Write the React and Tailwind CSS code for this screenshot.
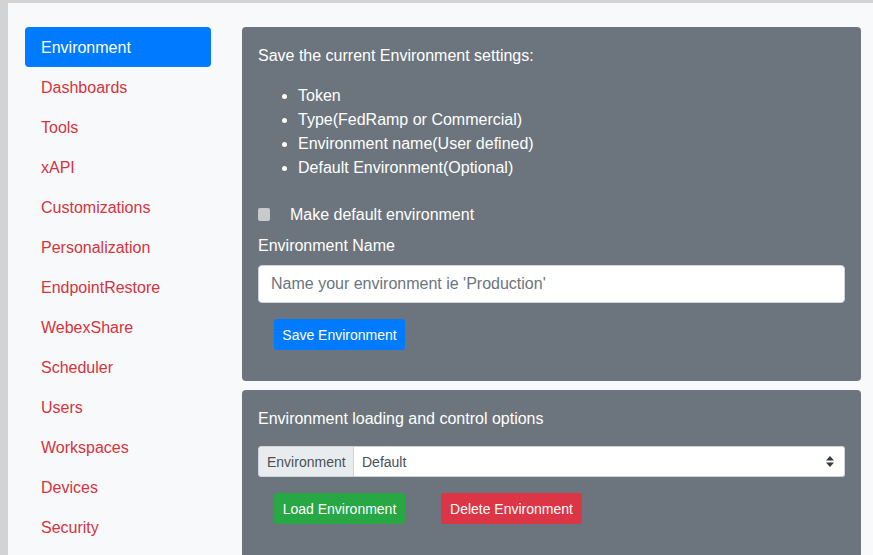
import { useState } from 'react';

const navItems = [
  'Environment',
  'Dashboards',
  'Tools',
  'xAPI',
  'Customizations',
  'Personalization',
  'EndpointRestore',
  'WebexShare',
  'Scheduler',
  'Users',
  'Workspaces',
  'Devices',
  'Security',
];

const App = () => {
  const [active, setActive] = useState('Environment');
  const [envName, setEnvName] = useState('');

  return (
    <div
      className="w-[873px] h-[555px] overflow-hidden bg-[#d3d3d3] pt-[3px] pl-[8px]"
      style={{ fontFamily: '"Liberation Sans", Arial, sans-serif' }}
    >
      <div className="flex h-full bg-[#f8f9fa]">
        {/* Sidebar */}
        <nav className="w-[234px] shrink-0 pl-[17px] pr-[31px] pt-[24px] flex flex-col">
          {navItems.map((item) => (
            <button
              key={item}
              onClick={() => setActive(item)}
              className={`h-10 px-4 pt-[2px] text-left text-base rounded-[4px] ${
                active === item ? 'bg-[#007bff] text-white' : 'text-[#d6333d]'
              }`}
            >
              {item}
            </button>
          ))}
        </nav>

        {/* Main content */}
        <main className="w-[619px] pt-[24px] flex flex-col gap-[9px]">
          <section className="bg-[#6c757d] rounded-[4px] px-4 pt-[17px] pb-[31px] text-white">
            <p className="text-base leading-6">Save the current Environment settings:</p>
            <ul className="mt-4 pl-10 list-disc text-base leading-6">
              <li>Token</li>
              <li>Type(FedRamp or Commercial)</li>
              <li>Environment name(User defined)</li>
              <li>Default Environment(Optional)</li>
            </ul>
            <label className="mt-[23px] flex items-center h-6 text-base">
              <span className="w-[12px] h-[13px] rounded-[2px] bg-[#c9cacb] mr-5 -mt-[2px]" />
              Make default environment
            </label>
            <p className="mt-[7px] text-base leading-6">Environment Name</p>
            <input
              value={envName}
              onChange={(e) => setEnvName(e.target.value)}
              placeholder="Name your environment ie 'Production'"
              className="mt-[7px] w-full h-[38px] rounded-[4px] bg-white px-3 text-base text-[#495057] placeholder:text-[#6c757d] border border-[#ced4da] outline-none"
            />
            <button className="mt-4 ml-4 h-[31px] w-[131px] rounded-[3px] bg-[#007bff] text-sm text-white">
              Save Environment
            </button>
          </section>

          <section className="bg-[#6c757d] rounded-[4px] px-4 pt-[17px] pb-[40px] text-white">
            <p className="text-base leading-6">Environment loading and control options</p>
            <div className="mt-[15px] flex h-[31px] text-sm">
              <span className="w-[96px] flex items-center px-2 bg-[#e9ecef] text-[#495057] rounded-l-[3px] border border-[#ced4da]">
                Environment
              </span>
              <div className="flex-1 flex items-center justify-between pl-2 pr-[10px] bg-white text-[#495057] rounded-r-[3px] border border-l-0 border-[#ced4da]">
                <span>Default</span>
                <svg width="8" height="11" viewBox="0 0 8 11">
                  <path d="M4 0 L8 4.5 L0 4.5 Z" fill="#343a40" />
                  <path d="M0 6.5 L8 6.5 L4 11 Z" fill="#343a40" />
                </svg>
              </div>
            </div>
            <div className="mt-4 ml-4 flex gap-[36px]">
              <button className="h-[31px] w-[131px] rounded-[3px] bg-[#28a745] text-sm text-white">
                Load Environment
              </button>
              <button className="h-[31px] w-[141px] rounded-[3px] bg-[#dc3545] text-sm text-white">
                Delete Environment
              </button>
            </div>
          </section>
        </main>
      </div>
    </div>
  );
};

export default App;
